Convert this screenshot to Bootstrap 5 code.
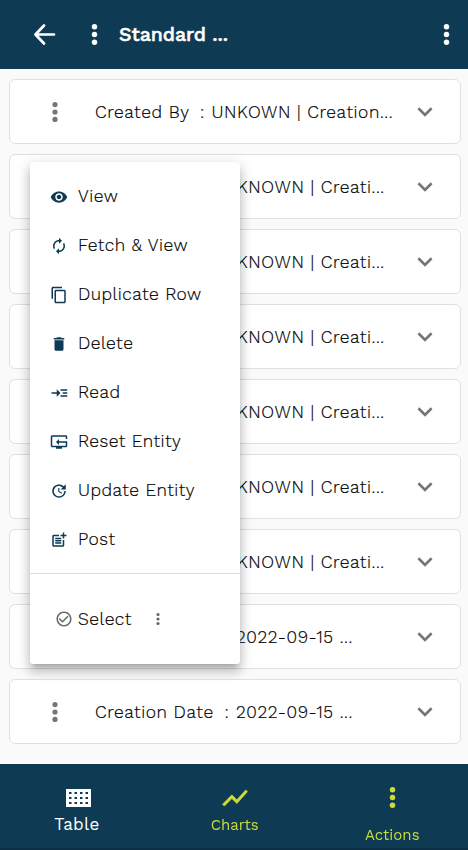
<!DOCTYPE html>
<html lang="en">
<head>
<meta charset="utf-8">
<meta name="viewport" content="width=device-width, initial-scale=1">
<title>Standard</title>
<link href="https://cdn.jsdelivr.net/npm/bootstrap@5.3.0/dist/css/bootstrap.min.css" rel="stylesheet">
<style>
:root{--navy:#0e3a53;--lime:#cddc39}
body{font-family:"Work Sans",Inter,"Noto Sans",sans-serif;background:#fafafa;color:#000;height:850px;overflow:hidden}
svg{display:block;flex:none;fill:currentColor}
.topbar{background:var(--navy);height:69px;padding:0 18px 0 33px}
.topbar h1{font-size:19.5px;font-weight:500;letter-spacing:-.05px;-webkit-text-stroke:.5px currentColor;margin:0 0 0 21px}
.back{fill:none;stroke:currentColor;stroke-width:2.7;stroke-linecap:round;stroke-linejoin:round;margin-right:35px}
.entries{padding:10px 7px 0 9px;gap:10px}
.entry{height:65px;border:1px solid #e0e0e0;border-radius:6px;background:#fff;padding:0 20px 0 35px}
.entry .dots{color:#757575;margin-right:30px}
.entry .chev{color:#757575}
.line{font-size:17.4px;line-height:24px;white-space:nowrap;letter-spacing:.6px}
.line,.actions{font-weight:300;-webkit-text-stroke:.2px currentColor}
.line span{display:inline-block}
.who{width:105px}.when{width:129.5px}.sep{width:11.5px}
.actions{position:absolute;left:30px;top:162px;width:210px;height:502px;background:#fff;border-radius:3px;box-shadow:0 5px 5px -3px rgba(0,0,0,.2),0 8px 10px 1px rgba(0,0,0,.14),0 3px 14px 2px rgba(0,0,0,.12);padding-top:10px;letter-spacing:.5px}
.actions .act{height:49px;padding-left:20px;gap:10px;font-size:17.4px}
.act svg{color:var(--navy)}
.picker{border-top:1px solid #dcdcdc;height:91px;margin-top:9px;padding-left:25px;font-size:17.4px}
.picker svg{color:#666}
.picker .sel{margin:1px 24px 0 5px}
.bottombar{background:var(--navy);height:86px;position:fixed;left:0;right:0;bottom:0;border-bottom:2px solid #0b2f44;color:var(--lime);font-size:15px;line-height:20px}
.bottombar .tab{flex:0 0 157.5px}
.bottombar .tab:first-child{flex-basis:156px}
.bottombar .on{color:#fff;font-size:17px}
.bottombar .on svg{margin:25px 0 7px}
.bottombar .on span{margin-right:2px;letter-spacing:.3px}
.bottombar .graph{margin:19px 0 2px}
.bottombar .more{margin:23px 0 17px}
</style>
<script src="https://cdn.jsdelivr.net/npm/bootstrap@5.3.0/dist/js/bootstrap.bundle.min.js"></script>
</head>
<body>
<svg width="0" height="0" class="position-absolute">
<symbol id="dots" viewBox="0 0 6 20"><circle cx="3" cy="2.6" r="2.6"/><circle cx="3" cy="10" r="2.6"/><circle cx="3" cy="17.4" r="2.6"/></symbol>
<symbol id="chev" viewBox="0 0 24 24"><path d="M16.59 8.29L12 12.87 7.41 8.29 6 9.7l6 6 6-6z"/></symbol>
</svg>
<header class="topbar d-flex align-items-center text-white">
<svg class="back" width="23" height="22" viewBox="0 0 23 22"><path d="M21 10.500H3M11 1.500L2.500 10.500l8.500 9"/></svg>
<svg width="7" height="21"><use href="#dots"/></svg>
<h1>Standard ...</h1>
<svg class="ms-auto" width="7" height="21"><use href="#dots"/></svg>
</header>
<main class="entries d-flex flex-column">
<div class="entry d-flex align-items-center"><svg class="dots" width="20" height="20"><use href="#dots"/></svg><div class="line"><span class="who">Created By</span><span class="sep">:</span><span class="val">UNKOWN | Creation...</span></div><svg class="chev ms-auto" width="30" height="30"><use href="#chev"/></svg></div>
<div class="entry d-flex align-items-center"><svg class="dots" width="20" height="20"><use href="#dots"/></svg><div class="line"><span class="who">Created By</span><span class="sep">:</span><span class="val">UNKNOWN | Creati...</span></div><svg class="chev ms-auto" width="30" height="30"><use href="#chev"/></svg></div>
<div class="entry d-flex align-items-center"><svg class="dots" width="20" height="20"><use href="#dots"/></svg><div class="line"><span class="who">Created By</span><span class="sep">:</span><span class="val">UNKNOWN | Creati...</span></div><svg class="chev ms-auto" width="30" height="30"><use href="#chev"/></svg></div>
<div class="entry d-flex align-items-center"><svg class="dots" width="20" height="20"><use href="#dots"/></svg><div class="line"><span class="who">Created By</span><span class="sep">:</span><span class="val">UNKNOWN | Creati...</span></div><svg class="chev ms-auto" width="30" height="30"><use href="#chev"/></svg></div>
<div class="entry d-flex align-items-center"><svg class="dots" width="20" height="20"><use href="#dots"/></svg><div class="line"><span class="who">Created By</span><span class="sep">:</span><span class="val">UNKNOWN | Creati...</span></div><svg class="chev ms-auto" width="30" height="30"><use href="#chev"/></svg></div>
<div class="entry d-flex align-items-center"><svg class="dots" width="20" height="20"><use href="#dots"/></svg><div class="line"><span class="who">Created By</span><span class="sep">:</span><span class="val">UNKNOWN | Creati...</span></div><svg class="chev ms-auto" width="30" height="30"><use href="#chev"/></svg></div>
<div class="entry d-flex align-items-center"><svg class="dots" width="20" height="20"><use href="#dots"/></svg><div class="line"><span class="who">Created By</span><span class="sep">:</span><span class="val">UNKNOWN | Creati...</span></div><svg class="chev ms-auto" width="30" height="30"><use href="#chev"/></svg></div>
<div class="entry d-flex align-items-center"><svg class="dots" width="20" height="20"><use href="#dots"/></svg><div class="line"><span class="when">Creation Date</span><span class="sep">:</span><span class="val">2022-09-15 ...</span></div><svg class="chev ms-auto" width="30" height="30"><use href="#chev"/></svg></div>
<div class="entry d-flex align-items-center"><svg class="dots" width="20" height="20"><use href="#dots"/></svg><div class="line"><span class="when">Creation Date</span><span class="sep">:</span><span class="val">2022-09-15 ...</span></div><svg class="chev ms-auto" width="30" height="30"><use href="#chev"/></svg></div>
</main>
<div class="actions">
<div class="act d-flex align-items-center"><svg width="18" height="18" viewBox="0 0 24 24"><path d="M12 4.5C7 4.5 2.73 7.61 1 12c1.73 4.39 6 7.5 11 7.5s9.27-3.11 11-7.5c-1.73-4.39-6-7.5-11-7.5zM12 17c-2.76 0-5-2.24-5-5s2.24-5 5-5 5 2.24 5 5-2.24 5-5 5zm0-8c-1.66 0-3 1.34-3 3s1.34 3 3 3 3-1.34 3-3-1.34-3-3-3z"/></svg><span>View</span></div>
<div class="act d-flex align-items-center"><svg width="18" height="18" viewBox="0 0 24 24"><path d="M12 6v3l4-4-4-4v3c-4.42 0-8 3.58-8 8 0 1.57.46 3.03 1.24 4.26L6.7 14.8c-.45-.83-.7-1.79-.7-2.8 0-3.31 2.69-6 6-6zm6.76 1.74L17.3 9.2c.44.84.7 1.79.7 2.8 0 3.31-2.69 6-6 6v-3l-4 4 4 4v-3c4.42 0 8-3.58 8-8 0-1.57-.46-3.03-1.24-4.26z"/></svg><span>Fetch &amp; View</span></div>
<div class="act d-flex align-items-center"><svg width="18" height="18" viewBox="0 0 24 24"><path d="M16 1H4c-1.1 0-2 .9-2 2v14h2V3h12V1zm3 4H8c-1.1 0-2 .9-2 2v14c0 1.1.9 2 2 2h11c1.1 0 2-.9 2-2V7c0-1.1-.9-2-2-2zm0 16H8V7h11v14z"/></svg><span>Duplicate Row</span></div>
<div class="act d-flex align-items-center"><svg width="18" height="18" viewBox="0 0 24 24"><path d="M6 19c0 1.1.9 2 2 2h8c1.1 0 2-.9 2-2V7H6v12zM19 4h-3.5l-1-1h-5l-1 1H5v2h14V4z"/></svg><span>Delete</span></div>
<div class="act d-flex align-items-center"><svg width="18" height="18" viewBox="0 0 24 24"><path d="M23 7h-9v2h9V7zm0 8h-9v2h9v-2zm0-4h-6v2h6v-2zm-9 1L9 7v4H2v2h7v4l5-5z"/></svg><span>Read</span></div>
<div class="act d-flex align-items-center"><svg width="18" height="18" viewBox="0 0 24 24"><path d="M23 8V5c0-1.100-.9-2-2-2H3c-1.100 0-2 .9-2 2v12c0 1.100.9 2 2 2h5v2h8v-2h5c1.100 0 2-.9 2-2v-6H12V8l-4 4 4 4v-3h9v4H3V5h18v3z"/></svg><span>Reset Entity</span></div>
<div class="act d-flex align-items-center"><svg width="18" height="18" viewBox="0 0 24 24"><path d="M21 10.120h-6.780l2.740-2.820c-2.730-2.700-7.150-2.800-9.880-.1-2.730 2.710-2.730 7.080 0 9.790s7.150 2.710 9.880 0C18.320 15.650 19 14.080 19 12.100h2c0 1.980-.88 4.550-2.640 6.290-3.510 3.480-9.210 3.480-12.720 0-3.500-3.470-3.530-9.110-.02-12.580s9.140-3.470 12.650 0L21 3v7.120zM12.500 8v4.250l3.500 2.080-.72 1.210L11 13V8h1.500z"/></svg><span>Update Entity</span></div>
<div class="act d-flex align-items-center"><svg width="18" height="18" viewBox="0 0 24 24"><path d="M17 19H5V7h7V5H5c-1.100 0-2 .9-2 2v12c0 1.100.9 2 2 2h12c1.100 0 2-.9 2-2v-7h-2zM19 2h-2v3h-3v2h3v3h2V7h3V5h-3zM7 9h8v2H7zM7 12h8v2H7zM7 15h8v2H7z"/></svg><span>Post</span></div>
<div class="picker d-flex align-items-center"><svg width="18" height="18" viewBox="0 0 24 24"><path d="M16.590 7.580L10 14.170l-3.590-3.580L5 12l5 5 8-8zM12 2C6.480 2 2 6.480 2 12s4.480 10 10 10 10-4.480 10-10S17.520 2 12 2zm0 18c-4.420 0-8-3.580-8-8s3.580-8 8-8 8 3.580 8 8-3.580 8-8 8z"/></svg><span class="sel">Select</span><svg width="4" height="12"><use href="#dots"/></svg></div>
</div>
<footer class="bottombar d-flex">
<div class="tab on d-flex flex-column align-items-center"><svg width="25" height="18" viewBox="0 0 25 18"><path fill-rule="evenodd" d="M0 0h25v18H0zM3 3v2h2.500V3zM8.500 3v2H11V3zM14 3v2h2.500V3zM19.500 3v2H22V3zM3 8v2h2.500V8zM8.500 8v2H11V8zM14 8v2h2.500V8zM19.500 8v2H22V8zM3 13v2h2.500v-2zM8.500 13v2H11v-2zM14 13v2h2.500v-2zM19.500 13v2H22v-2z"/></svg><span>Table</span></div>
<div class="tab d-flex flex-column align-items-center"><svg class="graph" width="30" height="30" viewBox="0 0 24 24"><path d="M3.500 18.490l6-6.010 4 4L22 6.920l-1.410-1.410-7.090 7.970-4-4L2 16.990z" stroke="currentColor" stroke-width=".5"/></svg><span>Charts</span></div>
<div class="tab d-flex flex-column align-items-center"><svg class="more" width="7" height="21"><use href="#dots"/></svg><span>Actions</span></div>
</footer>
</body>
</html>
